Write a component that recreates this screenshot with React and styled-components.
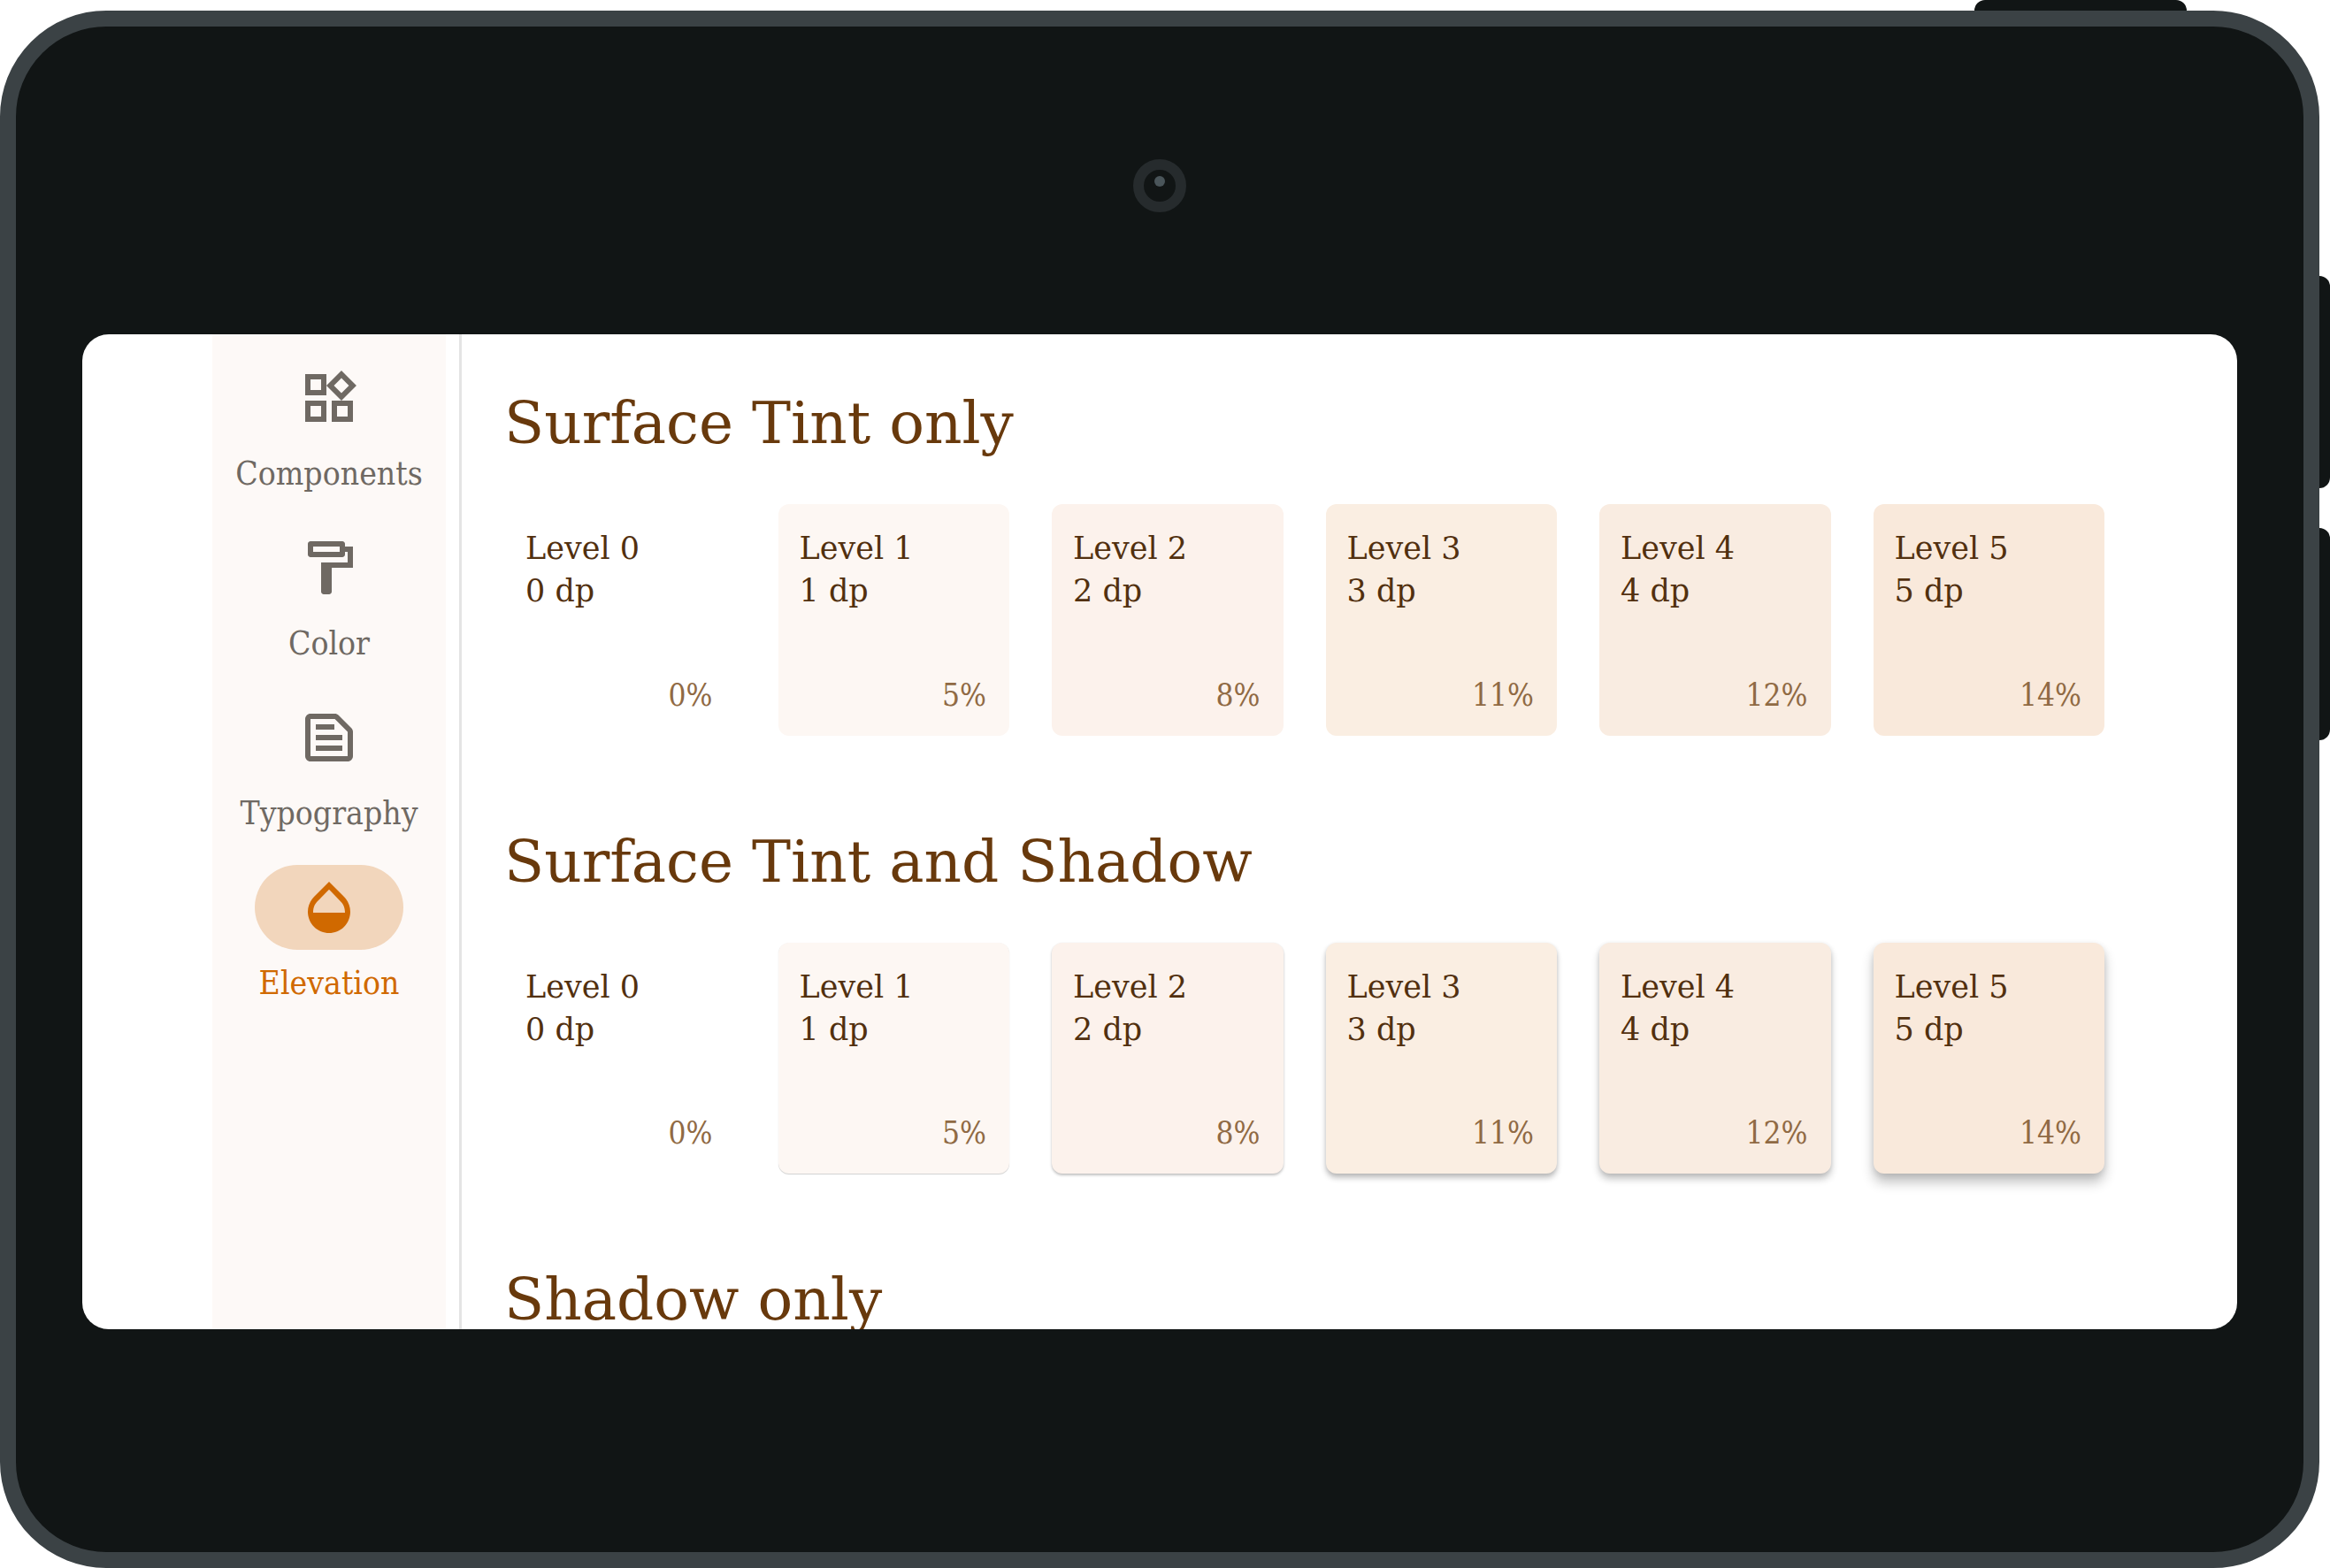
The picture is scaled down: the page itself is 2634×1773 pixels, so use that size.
import React from "react";
import styled, { createGlobalStyle, css } from "styled-components";

const serif = '"Roboto Slab", "DejaVu Serif", serif';
const serifNarrow = '"Roboto Slab", "DejaVu Serif Condensed", "DejaVu Serif", serif';

const GlobalStyle = createGlobalStyle`
  *, *::before, *::after { box-sizing: border-box; }
  body { margin: 0; background: #ffffff; font-family: ${serif}; }
`;

const Stage = styled.div`
  position: relative;
  height: 100vh;
  padding: 12px 12px 0 0;
  overflow: hidden;
`;

const sides = {
  top: css`
    top: 0;
    right: 162px;
    width: 240px;
    height: 12px;
    border-radius: 12px 12px 0 0;
  `,
  right: css`
    right: 0;
    width: 12px;
    height: 240px;
    border-radius: 0 12px 12px 0;
  `,
};

const HardwareKey = styled.span`
  position: absolute;
  background: #111515;
  ${({ $side }) => sides[$side]}
  ${({ $top }) => $top && `top: ${$top}px;`}
`;

const Device = styled.div`
  display: flex;
  flex-direction: column;
  height: 100%;
  padding: 0 75px 252px;
  border: 18px solid #3b4245;
  border-radius: 120px;
  background: #111515;
`;

const Bezel = styled.div`
  flex: none;
  display: flex;
  justify-content: center;
  height: 348px;
  padding-top: 150px;
`;

const Camera = styled.span`
  display: flex;
  justify-content: center;
  width: 60px;
  height: 60px;
  padding-top: 7px;
  border: 12px solid #262b2d;
  border-radius: 50%;

  &::after {
    content: "";
    width: 12px;
    height: 12px;
    border-radius: 50%;
    background: #4a555a;
  }
`;

const Screen = styled.div`
  flex: 1;
  display: flex;
  min-height: 0;
  overflow: hidden;
  padding: 0 150px 0 147px;
  border-radius: 30px;
  background: #ffffff;
`;

const Rail = styled.nav`
  flex: none;
  display: flex;
  flex-direction: column;
  gap: 34px;
  width: 264px;
  margin-right: 15px;
  padding-top: 24px;
  background: #fdf9f7;
`;

const RailButton = styled.button`
  display: flex;
  flex-direction: column;
  align-items: center;
  gap: 14px;
  padding: 0;
  border: 0;
  background: none;
  color: ${({ $active }) => ($active ? "#d06900" : "#6f6963")};
  font-family: ${serifNarrow};
  font-size: 37px;
  line-height: 48px;
  cursor: pointer;
`;

const Pill = styled.span`
  display: grid;
  place-items: center;
  width: 168px;
  height: 96px;
  border-radius: 48px;
  background: ${({ $active }) => ($active ? "#f2d6bc" : "transparent")};
`;

const Icon = styled.svg`
  display: block;
  width: 72px;
  height: 72px;
  fill: currentColor;
`;

const Content = styled.main`
  flex: 1;
  display: flex;
  flex-direction: column;
  gap: 102px;
  min-width: 0;
  padding: 60px 0 0 48px;
  border-left: 3px solid #e4e4e4;
`;

const Section = styled.section`
  display: flex;
  flex-direction: column;
  gap: 50px;
`;

const Heading = styled.h2`
  margin: 0;
  color: #68390c;
  font-size: 66px;
  font-weight: 400;
  line-height: 82px;
`;

const Grid = styled.div`
  display: grid;
  grid-template-columns: repeat(6, minmax(0, 1fr));
  gap: 48px;
`;

const Card = styled.article`
  display: flex;
  flex-direction: column;
  justify-content: space-between;
  aspect-ratio: 1;
  padding: 26px 26px 22px 24px;
  border-radius: 12px;
  background: ${({ $tint }) => $tint};
  box-shadow: ${({ $shadow }) => $shadow};
  color: #52300f;
  font-size: 35px;
  line-height: 48px;
`;

const Line = styled.p`
  margin: 0;
`;

const Percent = styled.p`
  margin: 0;
  text-align: right;
  color: #906a44;
  font-family: ${serifNarrow};
`;

const destinations = [
  {
    label: "Components",
    path: "M16.66 4.52l2.83 2.83-2.83 2.83-2.83-2.83 2.83-2.83M9 5v4H5V5h4m10 10v4h-4v-4h4M9 15v4H5v-4h4m7.66-13.31L11 7.34 16.66 13l5.66-5.66-5.66-5.65zM11 3H3v8h8V3zm10 10h-8v8h8v-8zm-10 0H3v8h8v-8z",
  },
  {
    label: "Color",
    path: "M18 4V3c0-.55-.45-1-1-1H5c-.55 0-1 .45-1 1v4c0 .55.45 1 1 1h12c.55 0 1-.45 1-1V6h1v4H9v11c0 .55.45 1 1 1h2c.55 0 1-.45 1-1v-9h8V4h-3zm-2 2H6V4h10v2z",
  },
  {
    label: "Typography",
    path: "M14.17 5L19 9.83V19H5V5h9.17m0-2H5c-1.1 0-2 .9-2 2v14c0 1.1.9 2 2 2h14c1.1 0 2-.9 2-2V9.83c0-.53-.21-1.04-.59-1.41l-4.83-4.83c-.37-.38-.88-.59-1.41-.59zM7 15h10v2H7v-2zm0-4h10v2H7v-2zm0-4h7v2H7V7z",
  },
  {
    label: "Elevation",
    active: true,
    path: "M17.66 8L12 2.35 6.34 8C4.78 9.56 4 11.64 4 13.64s.78 4.11 2.34 5.67 3.61 2.35 5.66 2.35 4.1-.79 5.66-2.35S20 15.64 20 13.64 19.22 9.56 17.66 8zM6 14c.01-2 .62-3.27 1.76-4.4L12 5.27l4.24 4.38C17.38 10.77 17.99 12 18 14H6z",
  },
];

const levels = [
  { tint: "#ffffff", percent: 0, shadow: "none" },
  { tint: "#fdf7f3", percent: 5, shadow: "0 1px 1px rgba(0,0,0,.18), 0 0 1px rgba(0,0,0,.05)" },
  { tint: "#fcf2ec", percent: 8, shadow: "0 2px 3px rgba(0,0,0,.24), 0 0 2px rgba(0,0,0,.05)" },
  { tint: "#faeee2", percent: 11, shadow: "0 5px 6px rgba(0,0,0,.24), 0 1px 4px rgba(0,0,0,.09)" },
  { tint: "#f9ece1", percent: 12, shadow: "0 6px 8px rgba(0,0,0,.24), 0 1px 5px rgba(0,0,0,.09)" },
  { tint: "#f9e9db", percent: 14, shadow: "0 10px 14px rgba(0,0,0,.24), 0 2px 7px rgba(0,0,0,.1)" },
];

function LevelGrid({ shadow }) {
  return (
    <Grid>
      {levels.map((level, i) => (
        <Card key={i} $tint={level.tint} $shadow={shadow ? level.shadow : "none"}>
          <div>
            <Line>Level {i}</Line>
            <Line>{i} dp</Line>
          </div>
          <Percent>{level.percent}%</Percent>
        </Card>
      ))}
    </Grid>
  );
}

export default function App() {
  return (
    <>
      <GlobalStyle />
      <Stage>
        <HardwareKey $side="top" />
        <HardwareKey $side="right" $top={312} />
        <HardwareKey $side="right" $top={597} />
        <Device>
          <Bezel>
            <Camera />
          </Bezel>
          <Screen>
            <Rail>
              {destinations.map(({ label, active, path }) => (
                <RailButton key={label} type="button" $active={active} aria-current={active ? "page" : undefined}>
                  <Pill $active={active}>
                    <Icon viewBox="0 0 24 24" aria-hidden="true">
                      <path d={path} />
                    </Icon>
                  </Pill>
                  {label}
                </RailButton>
              ))}
            </Rail>
            <Content>
              <Section>
                <Heading>Surface Tint only</Heading>
                <LevelGrid />
              </Section>
              <Section>
                <Heading>Surface Tint and Shadow</Heading>
                <LevelGrid shadow />
              </Section>
              <Section>
                <Heading>Shadow only</Heading>
              </Section>
            </Content>
          </Screen>
        </Device>
      </Stage>
    </>
  );
}
